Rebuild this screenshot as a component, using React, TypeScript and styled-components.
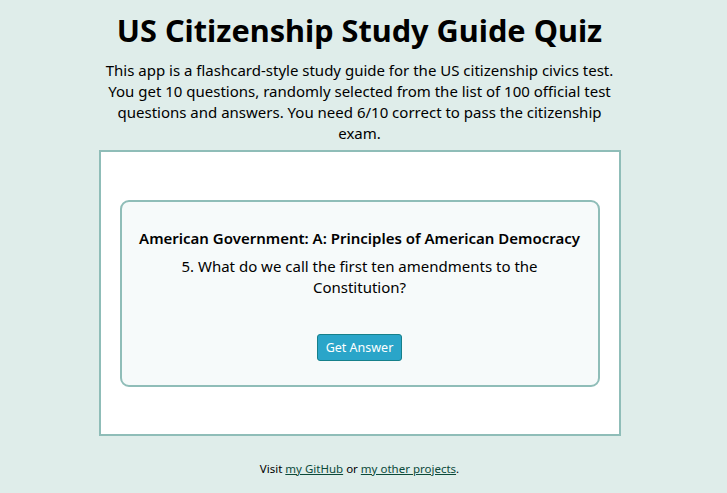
import React from "react";
import styled, { createGlobalStyle } from "styled-components";

const Global = createGlobalStyle`
  html, body { margin: 0; padding: 0; }
  body {
    background: #dfedea;
    font-family: "Noto Sans", "Open Sans", sans-serif;
    color: #000;
  }
`;

const Page = styled.div`
  width: 719px;
  display: flex;
  flex-direction: column;
  align-items: center;
`;

const Title = styled.h1`
  margin: 10px 0 0;
  font-size: 30.7px;
  font-weight: 700;
  line-height: 40px;
  text-align: center;
`;

const Intro = styled.p`
  margin: 10px 0 0;
  width: 520px;
  font-size: 15px;
  line-height: 21px;
  text-align: center;
`;

const Board = styled.main`
  box-sizing: border-box;
  margin-top: 6px;
  width: 522px;
  height: 286px;
  background: #fff;
  border: 2px solid #8fbdb8;
  padding: 48px 19px;
`;

const Card = styled.section`
  box-sizing: border-box;
  width: 480px;
  height: 187px;
  background: #f6fafa;
  border: 2px solid #8fbdb8;
  border-radius: 9px;
  padding: 25px 16px 0;
  display: flex;
  flex-direction: column;
  align-items: center;
  text-align: center;
`;

const Category = styled.h2`
  margin: 0;
  font-size: 15px;
  font-weight: 600;
  line-height: 22px;
`;

const Question = styled.p`
  margin: 7px 0 0;
  font-size: 15px;
  line-height: 21px;
  width: 380px;
`;

const Button = styled.button`
  margin-top: 36px;
  height: 27px;
  padding: 0 8px;
  background: #2aa5c9;
  color: #fff;
  border: 1px solid #16808a;
  border-radius: 3px;
  font-family: inherit;
  font-size: 12.5px;
  cursor: pointer;
`;

const Footer = styled.footer`
  margin-top: 25px;
  font-size: 11.5px;
  line-height: 16px;
`;

const Link = styled.a`
  color: #0b4a3a;
  text-decoration: underline;
`;

export default function App() {
  return (
    <>
      <Global />
      <Page>
        <Title>US Citizenship Study Guide Quiz</Title>
        <Intro>
          This app is a flashcard-style study guide for the US citizenship civics test. You get 10
          questions, randomly selected from the list of 100 official test questions and answers.
          You need 6/10 correct to pass the citizenship exam.
        </Intro>
        <Board>
          <Card>
            <Category>American Government: A: Principles of American Democracy</Category>
            <Question>5. What do we call the first ten amendments to the Constitution?</Question>
            <Button>Get Answer</Button>
          </Card>
        </Board>
        <Footer>
          Visit <Link href="#">my GitHub</Link> or <Link href="#">my other projects</Link>.
        </Footer>
      </Page>
    </>
  );
}
